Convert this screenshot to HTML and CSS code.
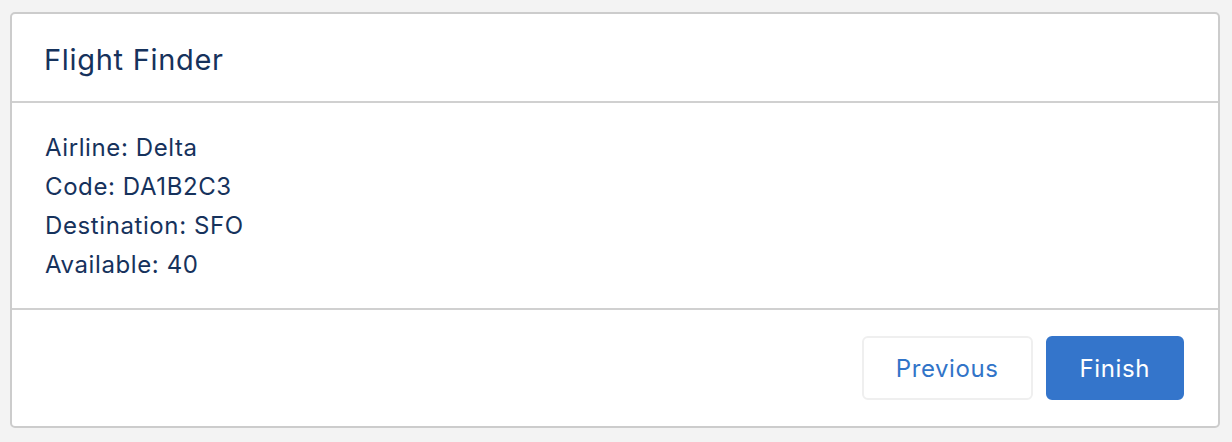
FILE: index.html
```html
<!DOCTYPE html>
<html lang="en">
<head>
    <meta charset="UTF-8">
    <meta name="viewport" content="width=device-width, initial-scale=1.0">
    <title>Flight Finder</title>
    <link rel="stylesheet" href="styles.css">
</head>
<body>
    <div class="card">
        <div class="card-header">
            <h2 class="card-title">Flight Finder</h2>
        </div>

        <!-- Flight details -->
        <div class="card-body">
            <p>Airline: Delta</p>
            <p>Code: DA1B2C3</p>
            <p>Destination: SFO</p>
            <p>Available: 40</p>
        </div>

        <div class="card-footer">
            <button class="btn btn-neutral">Previous</button>
            <button class="btn btn-brand">Finish</button>
        </div>
    </div>
</body>
</html>
```

FILE: styles.css
```css
body {
    margin: 12px 12px 0 10px;
    font-family: Inter, "Liberation Sans", Arial, sans-serif;
    background-color: #f3f3f3;
    color: #16325c;
}
.card {
    background-color: #fff;
    border: 2px solid #cccccc;
    border-radius: 5px;
}
.card-header {
    height: 84px;
    padding: 3px 32px 0;
    display: flex;
    align-items: center;
    border-bottom: 2px solid #d0d0d0;
}
.card-title {
    margin: 0;
    font-size: 29px;
    font-weight: normal;
    letter-spacing: 0.7px;
}
.card-body {
    padding: 25px 33px 24px;
    border-bottom: 2px solid #d0d0d0;
}
.card-body p {
    margin: 0;
    font-size: 24px;
    line-height: 39px;
    letter-spacing: 0.6px;
}
.card-footer {
    display: flex;
    justify-content: flex-end;
    gap: 13px;
    padding: 26px 34px 26px;
}
.btn {
    height: 64px;
    padding: 0 32px;
    font-family: inherit;
    font-size: 24px;
    letter-spacing: 0.6px;
    border-radius: 6px;
    cursor: pointer;
}
.btn-neutral {
    background-color: #fff;
    color: #3174c8;
    border: 2px solid #efefef;
}
.btn-brand {
    background-color: #3475cb;
    color: #fff;
    border: 2px solid #3475cb;
}
```
